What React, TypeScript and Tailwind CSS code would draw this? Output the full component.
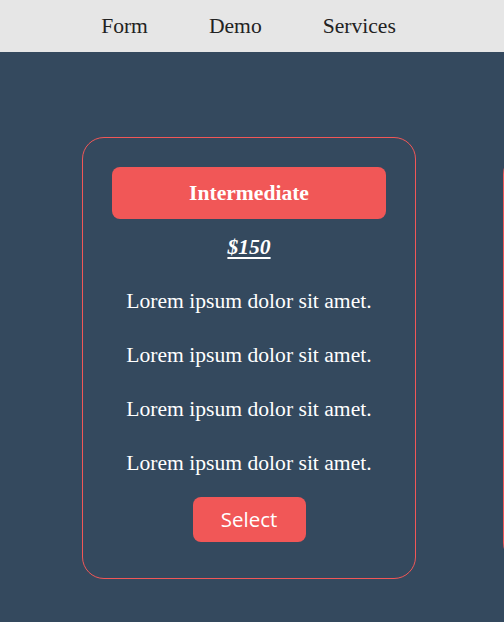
const features = [
  'Lorem ipsum dolor sit amet.',
  'Lorem ipsum dolor sit amet.',
  'Lorem ipsum dolor sit amet.',
  'Lorem ipsum dolor sit amet.',
]

function PlanCard({ title, price, items }: { title: string; price: string; items: string[] }) {
  return (
    <div className="flex-shrink-0 w-[334px] border border-[#f15757] rounded-[22px] flex flex-col items-center px-[29px] pt-[29px] pb-[36px]">
      <div className="w-full h-[52px] bg-[#f15757] rounded-[8px] flex items-center justify-center text-white text-[21.6px] font-bold">
        {title}
      </div>
      <p className="mt-[16px] leading-[24px] text-[21.6px] font-bold italic underline underline-offset-[3px] text-white">
        {price}
      </p>
      {items.map((item, i) => (
        <p key={i} className="mt-[30px] leading-[24px] text-[21.6px] text-white">
          {item}
        </p>
      ))}
      <button className="mt-[22px] w-[113px] h-[45px] bg-[#f15757] rounded-[8px] text-white text-[20.5px] font-['Open_Sans',sans-serif]">
        Select
      </button>
    </div>
  )
}

export default function App() {
  return (
    <div className="min-h-[622px] bg-[#34495e] font-['Liberation_Serif',serif] overflow-hidden">
      {/* Top nav */}
      <nav className="h-[52px] bg-[#e6e6e6] flex items-center justify-center gap-[61px] pr-[7px] text-[21.6px] text-[#222]">
        <a href="#">Form</a>
        <a href="#">Demo</a>
        <a href="#">Services</a>
      </nav>

      {/* Pricing cards, the next one only peeks in at the right edge */}
      <section className="flex items-center gap-[87px] pl-[82px] pt-[85px] overflow-hidden">
        <PlanCard title="Intermediate" price="$150" items={features} />
        <div className="flex-shrink-0 w-[334px] h-[413px] border border-[#f15757] rounded-[22px]" />
      </section>
    </div>
  )
}
